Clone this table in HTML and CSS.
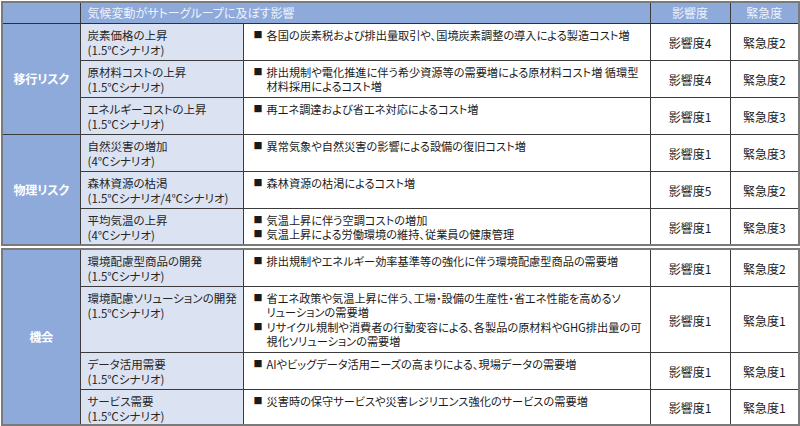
FILE: index.html
```html
<!DOCTYPE html>
<html lang="ja">
<head>
<meta charset="utf-8">
<link rel="stylesheet" href="styles.css">
</head>
<body>
<div class="page">
  <table class="grid">
    <colgroup>
      <col class="c-cat"><col class="c-sub"><col class="c-desc"><col class="c-imp"><col class="c-urg">
    </colgroup>
    <thead>
      <tr class="head">
        <th class="h-cat"></th>
        <th class="h-title" colspan="2">気候変動がサトーグループに及ぼす影響</th>
        <th class="h-col">影響度</th>
        <th class="h-col">緊急度</th>
      </tr>
    </thead>
    <tbody>
      <tr class="row">
        <td class="cat" rowspan="3">移行リスク</td>
        <td class="sub">炭素価格の上昇<br>(1.5℃シナリオ)</td>
        <td class="desc"><ul><li>各国の炭素税および排出量取引や、国境炭素調整の導入による製造コスト増</li></ul></td>
        <td class="lvl">影響度4</td>
        <td class="lvl">緊急度2</td>
      </tr>
      <tr class="row">
        <td class="sub">原材料コストの上昇<br>(1.5℃シナリオ)</td>
        <td class="desc"><ul><li>排出規制や電化推進に伴う希少資源等の需要増による原材料コスト増 循環型<br>材料採用によるコスト増</li></ul></td>
        <td class="lvl">影響度4</td>
        <td class="lvl">緊急度2</td>
      </tr>
      <tr class="row">
        <td class="sub">エネルギーコストの上昇<br>(1.5℃シナリオ)</td>
        <td class="desc"><ul><li>再エネ調達および省エネ対応によるコスト増</li></ul></td>
        <td class="lvl">影響度1</td>
        <td class="lvl">緊急度3</td>
      </tr>
      <tr class="row">
        <td class="cat" rowspan="3">物理リスク</td>
        <td class="sub">自然災害の増加<br>(4℃シナリオ)</td>
        <td class="desc"><ul><li>異常気象や自然災害の影響による設備の復旧コスト増</li></ul></td>
        <td class="lvl">影響度1</td>
        <td class="lvl">緊急度3</td>
      </tr>
      <tr class="row">
        <td class="sub">森林資源の枯渇<br>(1.5℃シナリオ/4℃シナリオ)</td>
        <td class="desc"><ul><li>森林資源の枯渇によるコスト増</li></ul></td>
        <td class="lvl">影響度5</td>
        <td class="lvl">緊急度2</td>
      </tr>
      <tr class="row">
        <td class="sub">平均気温の上昇<br>(4℃シナリオ)</td>
        <td class="desc"><ul><li>気温上昇に伴う空調コストの増加</li><li>気温上昇による労働環境の維持、従業員の健康管理</li></ul></td>
        <td class="lvl">影響度1</td>
        <td class="lvl">緊急度3</td>
      </tr>
    </tbody>
  </table>

  <table class="grid second">
    <colgroup>
      <col class="c-cat"><col class="c-sub"><col class="c-desc"><col class="c-imp"><col class="c-urg">
    </colgroup>
    <tbody>
      <tr class="row">
        <td class="cat" rowspan="4">機会</td>
        <td class="sub">環境配慮型商品の開発<br>(1.5℃シナリオ)</td>
        <td class="desc"><ul><li>排出規制やエネルギー効率基準等の強化に伴う環境配慮型商品の需要増</li></ul></td>
        <td class="lvl">影響度1</td>
        <td class="lvl lite">緊急度2</td>
      </tr>
      <tr class="row tall">
        <td class="sub">環境配慮ソリューションの開発<br>(1.5℃シナリオ)</td>
        <td class="desc"><ul><li>省エネ政策や気温上昇に伴う、工場・設備の生産性・省エネ性能を高めるソ<br>リューションの需要増</li><li>リサイクル規制や消費者の行動変容による、各製品の原材料やGHG排出量の可<br>視化ソリューションの需要増</li></ul></td>
        <td class="lvl">影響度1</td>
        <td class="lvl lite">緊急度1</td>
      </tr>
      <tr class="row">
        <td class="sub">データ活用需要<br>(1.5℃シナリオ)</td>
        <td class="desc"><ul><li>AIやビッグデータ活用ニーズの高まりによる、現場データの需要増</li></ul></td>
        <td class="lvl">影響度1</td>
        <td class="lvl lite">緊急度1</td>
      </tr>
      <tr class="row last">
        <td class="sub">サービス需要<br>(1.5℃シナリオ)</td>
        <td class="desc"><ul><li>災害時の保守サービスや災害レジリエンス強化のサービスの需要増</li></ul></td>
        <td class="lvl">影響度1</td>
        <td class="lvl lite">緊急度1</td>
      </tr>
    </tbody>
  </table>
</div>
</body>
</html>
```

FILE: styles.css
```css
* { box-sizing: border-box; }
html, body { margin: 0; padding: 0; background: #ffffff; }
body {
  font-family: "Noto Sans CJK JP", "Noto Sans", sans-serif;
  font-size: 12px;
  font-feature-settings: "palt";
  color: #1a1a1a;
}
.page {
  width: 800px;
  padding: 1px 2px 0 1px;
  display: flex;
  flex-direction: column;
  gap: 2px;
}
.grid {
  width: 797px;
  table-layout: fixed;
  border-collapse: collapse;
  border: 2px solid #7a7a7a;
}
.c-cat { width: 78px; }
.c-sub { width: 163px; }
.c-desc { width: 407px; }
.c-imp { width: 80px; }
.c-urg { width: 69px; }

.grid th, .grid td {
  border: 1px solid #3c3c3c;
  padding: 0;
  line-height: 15px;
  overflow: hidden;
}
.head th {
  height: 21px;
  background: #8eaadb;
  color: #eef3fb;
  font-weight: normal;
  border-bottom: 1px solid #2f2f2f;
}
.h-title { text-align: left; padding-left: 7px !important; }
.h-col { text-align: center; }

.row td { height: 37px; }
.row.tall td { height: 66px; }
.row.last td { height: 35px; }

.cat {
  background: #8eaadb;
  color: #ffffff;
  font-weight: bold;
  font-size: 12px;
  letter-spacing: -0.2px;
  text-align: center;
  vertical-align: middle;
}
.sub {
  background: #dbe3f3;
  vertical-align: top;
  padding: 4px 0 0 7px !important;
  color: #262626;
  font-size: 11.5px;
  white-space: nowrap;
}
.desc {
  vertical-align: top;
  padding: 4px 0 0 10px !important;
  font-size: 11.2px;
}
.desc ul { margin: 0; padding: 0; list-style: none; }
.desc li {
  position: relative;
  padding-left: 13px;
  line-height: 14.5px;
  white-space: nowrap;
}
.desc li::before {
  content: "■";
  position: absolute;
  left: 0;
  top: 0;
  font-size: 9px;
}
.lvl {
  text-align: center;
  vertical-align: middle;
  padding-top: 2px !important;
}
.second .lvl.lite { border-left-color: #a0a0a0; }
```
